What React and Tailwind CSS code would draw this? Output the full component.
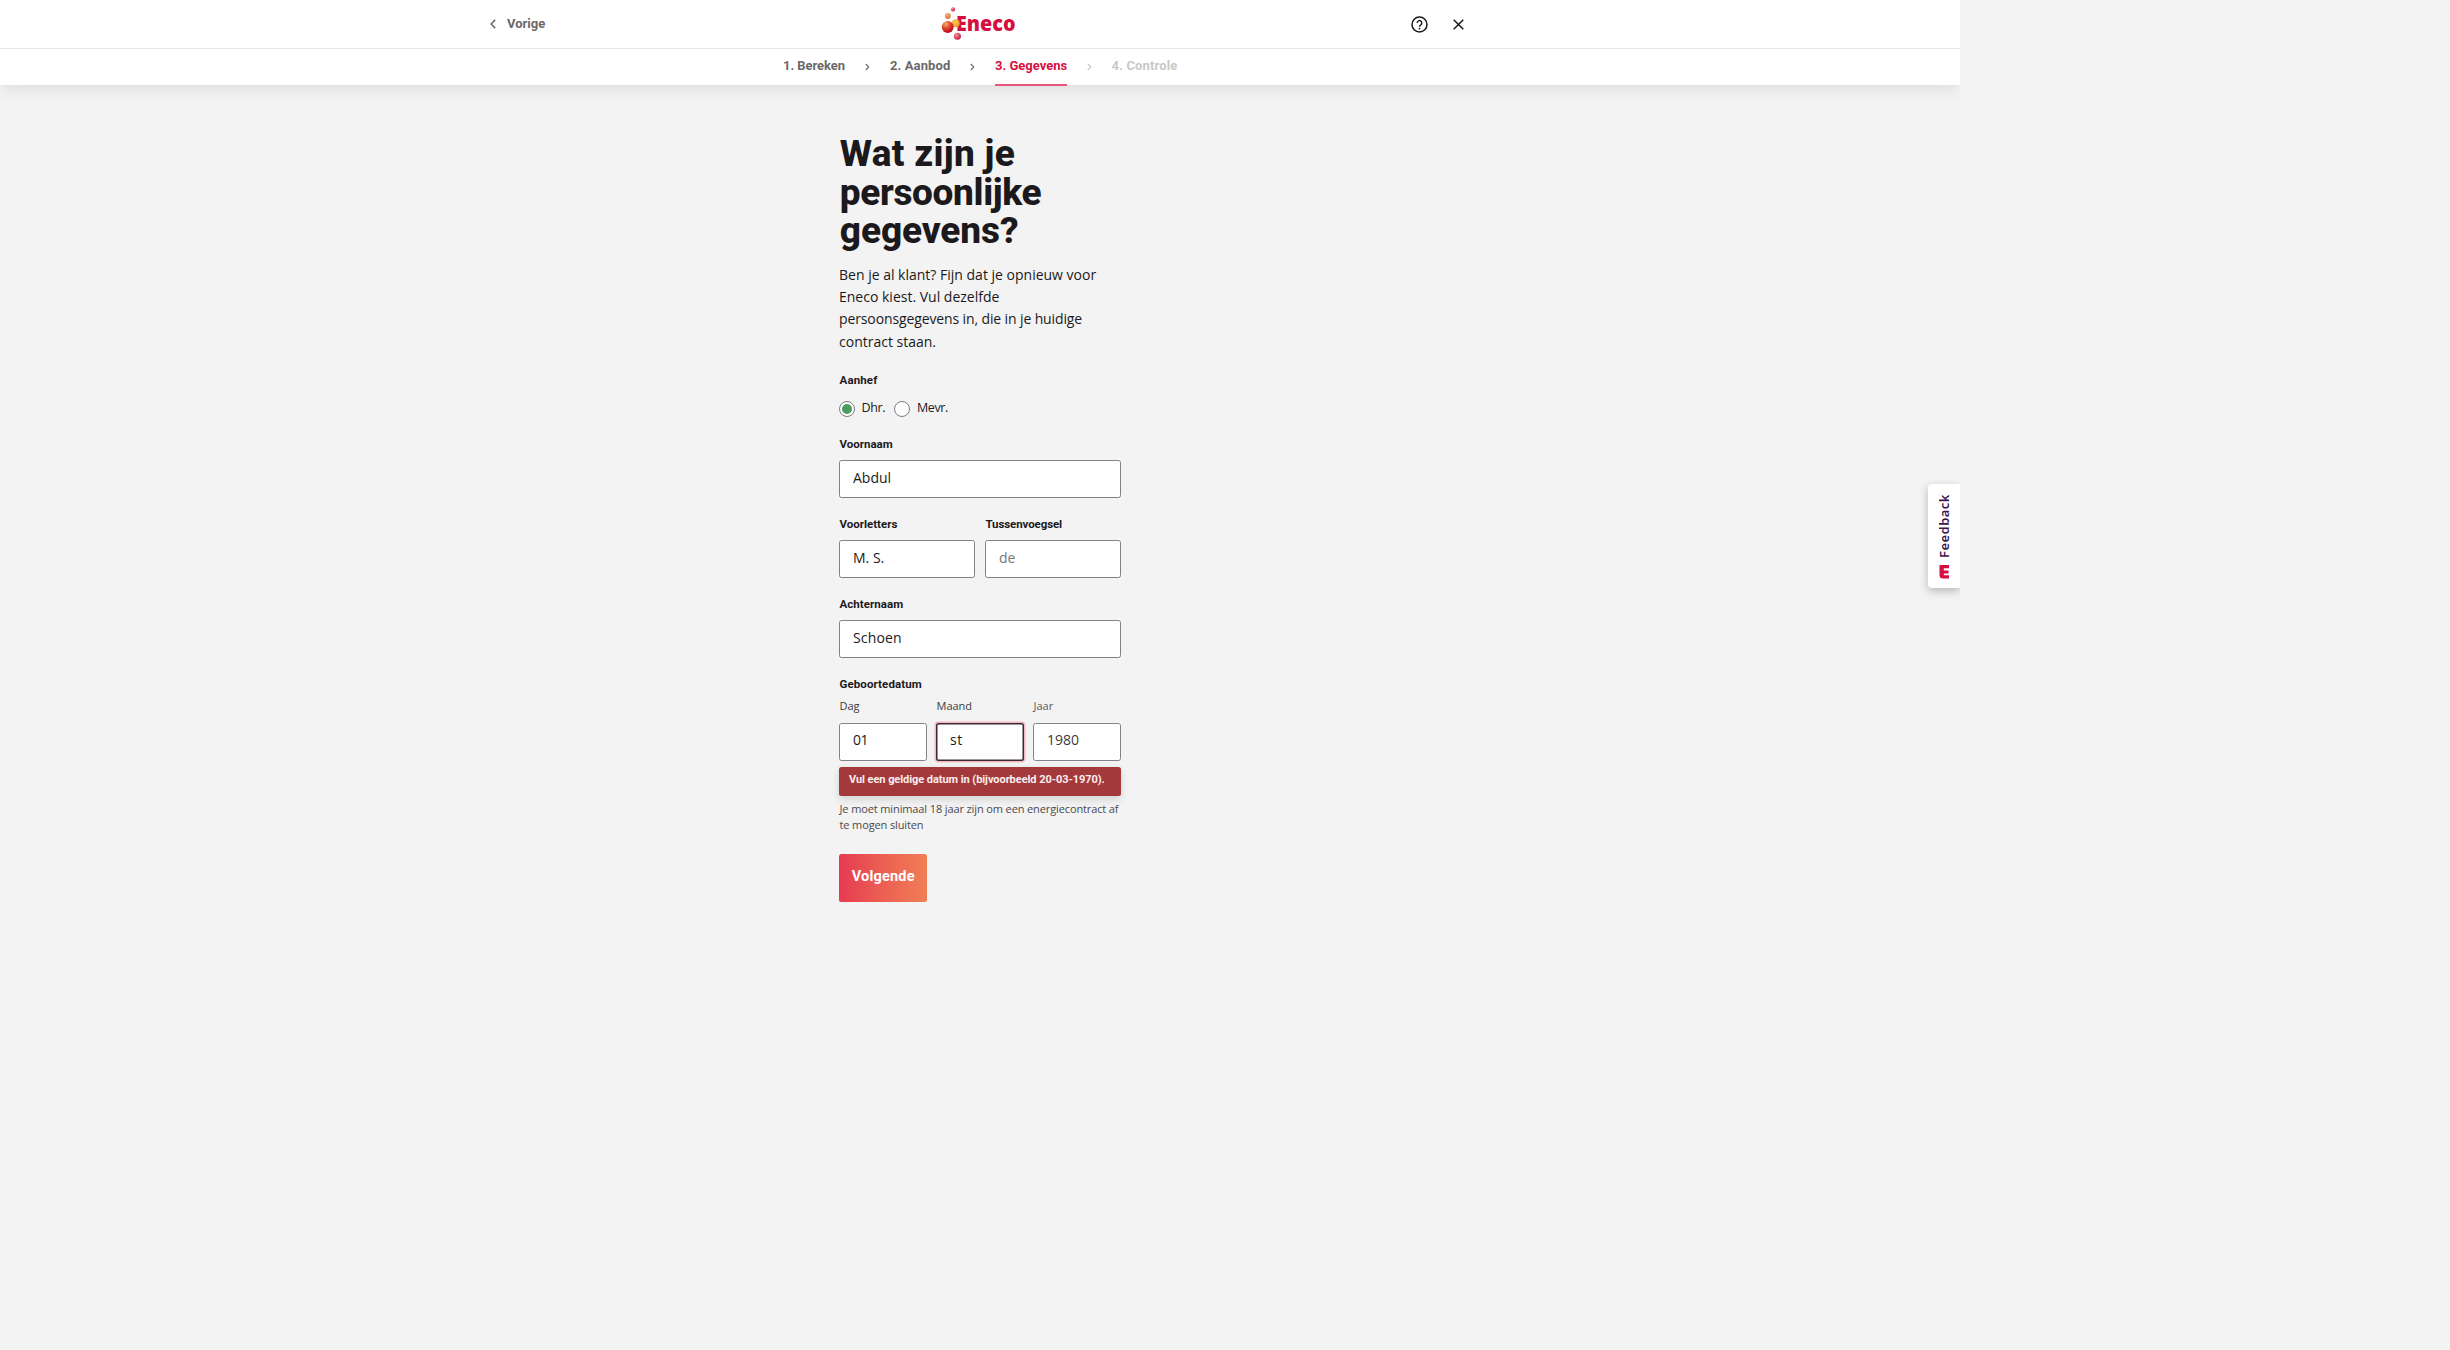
import React from "react";

const bold = "font-[Roboto,sans-serif] font-bold";
const regular = "font-['Open_Sans',sans-serif] font-normal";

function Logo() {
  return (
    <svg width="78" height="48" viewBox="0 0 78 48" className="shrink-0">
      <defs>
        <radialGradient id="big" cx="35%" cy="25%" r="80%">
          <stop offset="0" stopColor="#f7b26a" />
          <stop offset="0.5" stopColor="#d9402a" />
          <stop offset="1" stopColor="#c00020" />
        </radialGradient>
        <radialGradient id="orange" cx="35%" cy="30%" r="75%">
          <stop offset="0" stopColor="#f5b678" />
          <stop offset="1" stopColor="#de6a2e" />
        </radialGradient>
        <radialGradient id="yellow" cx="40%" cy="35%" r="75%">
          <stop offset="0" stopColor="#fbc95e" />
          <stop offset="1" stopColor="#ee9320" />
        </radialGradient>
        <radialGradient id="red" cx="35%" cy="30%" r="75%">
          <stop offset="0" stopColor="#ef9a94" />
          <stop offset="1" stopColor="#cc0f3c" />
        </radialGradient>
      </defs>
      <text x="16" y="30.9" textLength="59.5" lengthAdjust="spacingAndGlyphs" fill="#d5103f" className="font-['Noto_Sans',sans-serif] text-[21px] font-black">Eneco</text>
      <circle cx="13" cy="9.4" r="2.1" fill="url(#red)" />
      <circle cx="7.8" cy="16" r="2.9" fill="url(#orange)" />
      <circle cx="15.7" cy="23.3" r="4" fill="url(#yellow)" />
      <circle cx="7.7" cy="27" r="5.9" fill="url(#big)" />
      <circle cx="17.4" cy="36.3" r="3.5" fill="url(#red)" />
    </svg>
  );
}

function Chevron({ className = "" }) {
  return (
    <svg width="5" height="8" viewBox="0 0 5 8" fill="none" stroke="currentColor" strokeWidth="1.1" className={`shrink-0 ${className}`}>
      <path d="M0.8 1 3.8 4 0.8 7" />
    </svg>
  );
}

function Label({ children, className = "" }) {
  return <span className={`${bold} block h-4 pl-[0.5px] whitespace-nowrap text-[11.5px] leading-4 text-[#1b191c] ${className}`}>{children}</span>;
}

function Field({ children, focused = false, className = "" }) {
  return (
    <div
      className={`${regular} flex h-[38px] items-center rounded-[2.5px] bg-white pb-[3px] text-[14px] leading-5 ${
        focused ? "pl-3.5 shadow-[0_0_0_1.5px_#f3b9c0,inset_0_0_0_1.5px_#3a2a33]" : "border border-[#828284] pl-[13px]"
      } ${className}`}
    >
      <span className="whitespace-nowrap">{children}</span>
    </div>
  );
}

export default function App() {
  return (
    <div className="h-[1350px] w-[2450px] overflow-hidden bg-[#f3f3f3] text-[#1b191c]">
      <div className="relative h-full w-[1960px] overflow-hidden">
        <header className="bg-white shadow-[0_2px_16px_rgba(0,0,0,0.11)]">
          <div className="flex h-[49px] items-center border-b border-[#e6e6e6] pl-[490px]">
            <div className="flex w-[450px] items-center text-[#6a686b]">
              <svg width="6" height="10" viewBox="0 0 6 10" fill="none" stroke="currentColor" strokeWidth="1.6">
                <path d="M5.2 0.8 1.2 5l4 4.2" />
              </svg>
              <span className={`${bold} ml-[11px] text-[13px] leading-4`}>Vorige</span>
            </div>
            <Logo />
            <div className="flex w-[446px] items-center justify-end gap-[25px] text-[#1b191c]">
              <svg width="17" height="17" viewBox="0 0 17 17" fill="none" stroke="currentColor" strokeWidth="1.5">
                <circle cx="8.5" cy="8.5" r="7.5" />
                <path d="M6.2 7a2.3 2.3 0 1 1 3.6 1.8C8.9 9.4 8.5 9.8 8.5 10.7" strokeWidth="1.4" />
                <circle cx="8.5" cy="12.6" r="0.9" fill="currentColor" stroke="none" />
              </svg>
              <svg width="11" height="11" viewBox="0 0 11 11" fill="none" stroke="currentColor" strokeWidth="1.5">
                <path d="M0.7 0.7 10.3 10.3M10.3 0.7 0.7 10.3" />
              </svg>
            </div>
          </div>
          <nav className={`${bold} flex h-9 items-center pl-[783px] text-[13px] leading-4 whitespace-nowrap text-[#6a686b]`}>
            <span className="w-[82px] pb-[3px] tracking-[-0.05px]">1. Bereken</span>
            <Chevron className="mr-5" />
            <span className="w-[80px] pb-[3px] tracking-[0.1px]">2. Aanbod</span>
            <Chevron className="mr-5" />
            <span className="flex h-[37px] w-[72px] items-center self-start border-b-2 border-[#e9557a] pb-[2px] text-[#d5103f]">3. Gegevens</span>
            <Chevron className="mr-5 ml-[19.5px] text-[#c8c8c8]" />
            <span className="pb-[3px] tracking-[0.14px] text-[#c8c8c8]">4. Controle</span>
          </nav>
        </header>

        <main className="ml-[839px] w-[282px] pt-[50px]">
          <h1 className="h-[128.6px] pl-[0.8px] font-[Roboto,sans-serif] text-[37px] leading-[38.7px] font-extrabold whitespace-nowrap">
            <span className="block tracking-[0.3px]">Wat zijn je</span>
            <span className="block tracking-[-0.35px]">persoonlijke</span>
            <span className="block tracking-[-0.1px]">gegevens?</span>
          </h1>
          <p className={`${regular} text-[14px] leading-[22.4px] whitespace-nowrap`}>
            <span className="block">Ben je al klant? Fijn dat je opnieuw voor</span>
            <span className="block">Eneco kiest. Vul dezelfde</span>
            <span className="block tracking-[-0.12px]">persoonsgegevens in, die in je huidige</span>
            <span className="block">contract staan.</span>
          </p>

          <Label className="mt-[18.8px] tracking-[0.15px]">Aanhef</Label>
          <div className={`${regular} mt-[12.8px] flex h-4 items-center text-[12.5px] leading-4`}>
            <span className="flex size-4 items-center justify-center rounded-full border border-[#7d7d80] bg-white">
              <span className="size-[10px] rounded-full bg-[#4c9b5f]" />
            </span>
            <span className="ml-[6.5px] w-[32.5px] pb-[2.5px] tracking-[-0.35px]">Dhr.</span>
            <span className="size-4 rounded-full border border-[#7d7d80] bg-white" />
            <span className="ml-[7px] pb-[2.5px] tracking-[-0.4px]">Mevr.</span>
          </div>

          <Label className="mt-[19.2px]">Voornaam</Label>
          <Field className="mt-2">Abdul</Field>

          <div className="mt-[18px] grid grid-cols-2 gap-[10px]">
            <div>
              <Label>Voorletters</Label>
              <Field className="mt-2">M. S.</Field>
            </div>
            <div>
              <Label className="tracking-[-0.1px]">Tussenvoegsel</Label>
              <Field className="mt-2 text-[#77767a]">de</Field>
            </div>
          </div>

          <Label className="mt-[18px] tracking-[0.05px]">Achternaam</Label>
          <Field className="mt-2 tracking-[0.15px]">Schoen</Field>

          <Label className="mt-[18px] tracking-[0.1px]">Geboortedatum</Label>
          <div className="mt-1.5 grid grid-cols-3 gap-[9px]">
            {[
              ["Dag", "01", "text-[#3c3a3d]", "tracking-[-0.5px]"],
              ["Maand", "st", "text-[#3c3a3d]", "tracking-[0.6px]"],
              ["Jaar", "1980", "text-[#5a585b]", "text-[#3c3a3d]"],
            ].map(([label, value, labelClass, valueClass]) => (
              <div key={label}>
                <span className={`${regular} block h-4 pl-[0.5px] text-[11px] leading-4 ${labelClass}`}>{label}</span>
                <Field focused={value === "st"} className={`mt-[8.5px] ${valueClass}`}>{value}</Field>
              </div>
            ))}
          </div>

          <div className={`${bold} mt-[6.5px] flex h-[28.5px] items-center rounded-[2.5px] bg-[#a4393b] pb-[2px] pl-[10px] text-[11px] tracking-[-0.06px] whitespace-nowrap text-[#fbeeee] shadow-[0_3px_8px_rgba(0,0,0,0.14)]`}>
            Vul een geldige datum in (bijvoorbeeld 20-03-1970).
          </div>
          <p className={`${regular} mt-[5.5px] pl-[0.5px] text-[11px] leading-4 tracking-[-0.12px] whitespace-nowrap text-[#4b494c]`}>
            <span className="block">Je moet minimaal 18 jaar zijn om een energiecontract af</span>
            <span className="block">te mogen sluiten</span>
          </p>
          <button className={`${bold} mt-[21px] flex h-[47.5px] w-[88px] items-center justify-center rounded-[2.5px] bg-linear-to-r from-[#e63950] to-[#f07e56] pb-[2.5px] pl-[0.5px] text-[14.5px] tracking-[0.2px] text-white`}>
            Volgende
          </button>
        </main>

        <aside className="absolute top-[484px] right-0 flex h-[104px] w-8 flex-col items-center rounded-l-[4px] bg-white shadow-[0_3px_8px_rgba(0,0,0,0.25)]">
          <span className="mt-[10px] h-[64px] rotate-180 font-['Noto_Sans',sans-serif] text-[13px] leading-[18px] font-semibold tracking-[0.45px] text-[#3b1450] [writing-mode:vertical-rl]">Feedback</span>
          <svg width="11" height="14" viewBox="0 0 11 14" fill="#d5103f" className="mt-[7px]">
            <path d="M0.500 0H10v3.200H4.800V5.400H9.500V8.400H4.800V10.300H10V13.500H4A3.500 3.500 0 0 1 0.500 10Z" />
          </svg>
        </aside>
      </div>
    </div>
  );
}
